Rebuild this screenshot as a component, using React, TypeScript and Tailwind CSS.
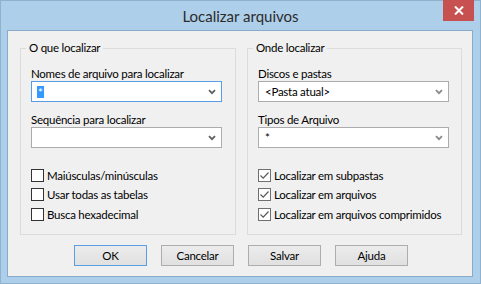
import React from "react";

function Chevron({ color = "#606060" }: { color?: string }) {
  return (
    <svg width="8" height="6" viewBox="0 0 8 6" className="shrink-0">
      <path d="M1 1.2 L4 4.2 L7 1.2" fill="none" stroke={color} strokeWidth="1.8" />
    </svg>
  );
}

function Combo({ children, focused = false, chevron = "#606060" }: { children?: React.ReactNode; focused?: boolean; chevron?: string }) {
  return (
    <div
      className={
        "w-[191px] h-[21px] bg-white border flex items-center justify-between pr-[5px] " +
        (focused ? "border-[#569de5]" : "border-[#acacac]")
      }
    >
      <div className="flex items-center">{children}</div>
      <Chevron color={chevron} />
    </div>
  );
}

function CheckBox({ checked = false, label, dark = false }: { checked?: boolean; label: string; dark?: boolean }) {
  return (
    <div className="flex items-center h-[13px]">
      <div
        className={
          "w-[13px] h-[13px] bg-white border flex items-center justify-center shrink-0 " +
          (dark ? "border-[#333333]" : "border-[#707070]")
        }
      >
        {checked && (
          <svg width="11" height="11" viewBox="0 0 11 11">
            <path d="M1.5 5.5 L4.2 8.2 L9.5 2.5" fill="none" stroke="#5a5a5a" strokeWidth="1.2" />
          </svg>
        )}
      </div>
      <span className="ml-[3px] leading-[15px] whitespace-nowrap">{label}</span>
    </div>
  );
}

function Group({ title, width, children }: { title: string; width: string; children: React.ReactNode }) {
  return (
    <div className={"relative h-[187px] border border-[#dcdcdc] pl-[10px] pt-[17px] " + width}>
      <span className="absolute top-[-9px] left-[5px] px-[3px] bg-[#f0f0f0] leading-[15px] whitespace-nowrap">
        {title}
      </span>
      {children}
    </div>
  );
}

function Btn({ label, def = false }: { label: string; def?: boolean }) {
  return (
    <div
      className={
        "w-[73px] h-[21px] border flex items-center justify-center bg-gradient-to-b from-[#ececec] to-[#e0e0e0] " +
        (def ? "border-[#5b9fe3]" : "border-[#adadad]")
      }
    >
      <span className="leading-[15px]">{label}</span>
    </div>
  );
}

export default function App() {
  return (
    <div className="w-[481px] h-[284px] bg-[#aecfea] border border-[#8fb2d1] flex flex-col font-['Segoe_UI',Lato,sans-serif] text-[11.5px] tracking-[-0.25px] text-black">
      <div className="relative h-[29px] shrink-0 flex items-center justify-center">
        <span className="text-[15px] tracking-normal text-[#2b2b2b] leading-[20px] mt-[1px]">Localizar arquivos</span>
        <div className="absolute right-[6px] top-[-1px] w-[31px] h-[21px] bg-[#c75050] flex items-center justify-center">
          <svg width="10" height="9" viewBox="0 0 10 9">
            <path d="M1 0.5 L9 8.5 M9 0.5 L1 8.5" stroke="white" strokeWidth="2" />
          </svg>
        </div>
      </div>
      <div className="ml-[6px] mr-[7px] mb-[6px] flex-1 border border-[#88aacb] bg-[#f0f0f0] flex flex-col">
        <div className="flex mt-[17px] ml-[12px] gap-[11px]">
          <Group title="O que localizar" width="w-[216px]">
            <div className="leading-[15px]">Nomes de arquivo para localizar</div>
            <Combo focused>
              <span className="ml-[5px] mt-[1px] px-[1px] h-[12px] leading-[14px] bg-[#3399ff] text-white">*</span>
            </Combo>
            <div className="leading-[15px] mt-[10px]">Sequência para localizar</div>
            <Combo />
            <div className="mt-[21px] flex flex-col">
              <CheckBox dark label="Maiúsculas/minúsculas" />
              <div className="mt-[6px]">
                <CheckBox dark label="Usar todas as tabelas" />
              </div>
              <div className="mt-[7px]">
                <CheckBox dark label="Busca hexadecimal" />
              </div>
            </div>
          </Group>
          <Group title="Onde localizar" width="w-[215px]">
            <div className="leading-[15px]">Discos e pastas</div>
            <Combo chevron="#8a8a8a">
              <span className="ml-[6px] leading-[15px]">&lt;Pasta atual&gt;</span>
            </Combo>
            <div className="leading-[15px] mt-[10px]">Tipos de Arquivo</div>
            <Combo chevron="#8a8a8a">
              <span className="ml-[6px] leading-[15px]">*</span>
            </Combo>
            <div className="mt-[21px] flex flex-col">
              <CheckBox checked label="Localizar em subpastas" />
              <div className="mt-[6px]">
                <CheckBox checked label="Localizar em arquivos" />
              </div>
              <div className="mt-[7px]">
                <CheckBox checked label="Localizar em arquivos comprimidos" />
              </div>
            </div>
          </Group>
        </div>
        <div className="flex mt-[10px] pl-[66px] gap-[14px]">
          <Btn def label="OK" />
          <Btn label="Cancelar" />
          <Btn label="Salvar" />
          <Btn label="Ajuda" />
        </div>
      </div>
    </div>
  );
}
